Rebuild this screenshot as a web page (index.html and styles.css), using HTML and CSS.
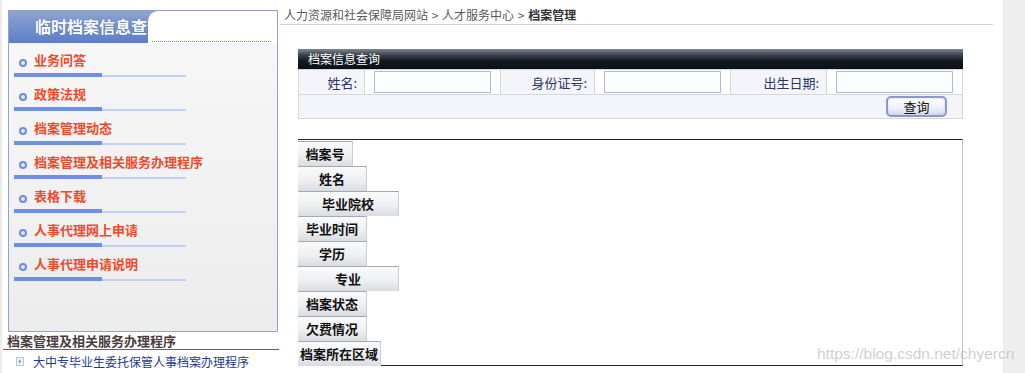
FILE: index.html
```html
<!DOCTYPE html>
<html lang="zh-CN">
<head>
<meta charset="utf-8">
<title>档案管理</title>
<link rel="stylesheet" href="styles.css">
</head>
<body>
<div class="page">
  <div class="edge"></div>
  <aside class="left">
    <div class="panel">
      <div class="panel-head">
        <div class="panel-title">临时档案信息查询</div>
        <div class="panel-tab"><div class="tab-line"></div></div>
      </div>
      <ul class="menu">
        <li class="menu-item"><div class="menu-row"><span class="dot"></span><span class="menu-text">业务问答</span></div><div class="bar"><span class="bar-dark"></span><span class="bar-light"></span></div></li>
        <li class="menu-item"><div class="menu-row"><span class="dot"></span><span class="menu-text">政策法规</span></div><div class="bar"><span class="bar-dark"></span><span class="bar-light"></span></div></li>
        <li class="menu-item"><div class="menu-row"><span class="dot"></span><span class="menu-text">档案管理动态</span></div><div class="bar"><span class="bar-dark"></span><span class="bar-light"></span></div></li>
        <li class="menu-item"><div class="menu-row"><span class="dot"></span><span class="menu-text">档案管理及相关服务办理程序</span></div><div class="bar"><span class="bar-dark"></span><span class="bar-light"></span></div></li>
        <li class="menu-item"><div class="menu-row"><span class="dot"></span><span class="menu-text">表格下载</span></div><div class="bar"><span class="bar-dark"></span><span class="bar-light"></span></div></li>
        <li class="menu-item"><div class="menu-row"><span class="dot"></span><span class="menu-text">人事代理网上申请</span></div><div class="bar"><span class="bar-dark"></span><span class="bar-light"></span></div></li>
        <li class="menu-item"><div class="menu-row"><span class="dot"></span><span class="menu-text">人事代理申请说明</span></div><div class="bar"><span class="bar-dark"></span><span class="bar-light"></span></div></li>
      </ul>
    </div>
    <div class="sub-title">档案管理及相关服务办理程序</div>
    <div class="sub-item">
      <svg class="sub-icon" width="8" height="9" viewBox="0 0 8 9"><rect x="0.5" y="0.5" width="7" height="8" fill="#eef1f8" stroke="#b9c2d8"/><path d="M3 2.5 L5.5 4.5 L3 6.5 Z" fill="#7f93bf"/></svg>
      <span class="sub-text">大中专毕业生委托保管人事档案办理程序</span>
    </div>
  </aside>

  <main class="main">
    <div class="crumb">人力资源和社会保障局网站 <span class="sep">&gt;</span> 人才服务中心 <span class="sep">&gt;</span> <b>档案管理</b></div>

    <div class="query">
      <div class="query-head">档案信息查询</div>
      <table class="query-table">
        <tr>
          <td class="lbl w66">姓名:</td>
          <td class="fld w136"><span class="input"></span></td>
          <td class="lbl w94">身份证号:</td>
          <td class="fld w136"><span class="input"></span></td>
          <td class="lbl w96">出生日期:</td>
          <td class="fld"><span class="input"></span></td>
        </tr>
        <tr>
          <td class="btn-cell" colspan="6"><span class="btn">查询</span></td>
        </tr>
      </table>
    </div>

    <div class="result">
      <div class="hcell w55">档案号</div>
      <div class="hcell w69">姓名</div>
      <div class="hcell w101">毕业院校</div>
      <div class="hcell w69">毕业时间</div>
      <div class="hcell w69">学历</div>
      <div class="hcell w101">专业</div>
      <div class="hcell w69">档案状态</div>
      <div class="hcell w69">欠费情况</div>
      <div class="hcell w83">档案所在区域</div>
    </div>
  </main>

  <div class="strip"></div>
  <div class="watermark">https://blog.csdn.net/chyercn</div>
</div>
</body>
</html>
```

FILE: styles.css
```css
* { box-sizing: border-box; }
html, body { margin: 0; padding: 0; background: #fff; }
body {
  font-family: "Noto Sans CJK SC", "Liberation Sans", sans-serif;
  font-size: 12px;
  color: #333;
}
.page {
  position: relative;
  display: flex;
  width: 1025px;
  height: 373px;
  overflow: hidden;
}
.edge { width: 2px; background: #ececec; flex: none; }

/* left column */
.left { width: 278px; flex: none; }
.panel {
  margin: 10px 0 0 6px;
  width: 270px;
  height: 322px;
  border: 1px solid #8fa4d4;
  background: linear-gradient(#f8f8f8, #ececec);
}
.panel-head {
  display: flex;
  height: 32px;
  background: linear-gradient(#8ea3d2, #5d7ec6);
}
.panel-title {
  width: 139px;
  flex: none;
  overflow: hidden;
  white-space: nowrap;
  padding-left: 26px;
  font-size: 16px;
  font-weight: bold;
  line-height: 31px;
  color: #fff;
  text-shadow: 0 0 1px #3b5aa8;
}
.panel-tab {
  flex: 1;
  background: #fff;
  border-top-left-radius: 10px;
  padding: 0 6px 0 4px;
}
.tab-line { height: 31px; border-bottom: 1px dotted #4f95cf; }
.menu { list-style: none; margin: 0; padding: 0; }
.menu-item { padding-top: 9px; height: 34px; }
.menu-row { display: flex; align-items: center; height: 16px; padding-left: 10px; }
.dot {
  width: 8px; height: 8px; flex: none;
  border-radius: 50%;
  border: 2px solid #6f8be0;
  background: #e4ebfb;
  margin-top: 6px;
  margin-right: 7px;
}
.menu-text {
  font-size: 13px;
  font-weight: bold;
  color: #ef4a2b;
  line-height: 16px;
  white-space: nowrap;
}
.bar { display: flex; align-items: flex-end; margin: 5px 0 0 5px; height: 4px; }
.bar-dark { width: 88px; height: 4px; background: #6f8fe6; }
.bar-light { width: 84px; height: 2px; background: #c2d0f8; }

.sub-title {
  margin-left: 1px;
  width: 276px;
  padding-left: 4px;
  height: 18px;
  line-height: 17px;
  font-size: 13px;
  font-weight: bold;
  color: #4b3d3d;
  border-bottom: 1px solid #3c66b6;
}
.sub-item { display: flex; align-items: center; height: 23px; padding-left: 14px; }
.sub-icon { flex: none; margin-right: 9px; }
.sub-text { font-size: 12px; color: #1c3a8e; white-space: nowrap; }

/* main */
.main { width: 723px; flex: none; }
.crumb {
  width: 713px;
  padding: 7px 0 1px 4px;
  line-height: 16px;
  font-size: 12px;
  color: #5a5a5a;
  border-bottom: 1px solid #d2d2d2;
  white-space: nowrap;
}
.crumb .sep { margin: 0 1px; }
.crumb b { color: #333; }

.query { margin: 24px 0 0 18px; width: 665px; }
.query-head {
  height: 20px;
  line-height: 20px;
  padding-left: 10px;
  font-size: 12px;
  color: #fff;
  background: linear-gradient(#7e868e 0%, #3a434c 30%, #111920 60%, #0b1117 100%);
}
.query-table {
  width: 665px;
  border-collapse: collapse;
  table-layout: fixed;
}
.query-table td { border: 1px solid #d7d7d7; padding: 0; }
.lbl {
  height: 25px;
  background: #f4f5fa;
  text-align: right;
  padding-right: 7px !important;
  font-size: 13px;
  color: #2c3366;
}
.fld { background: #fff; padding-left: 9px !important; }
.w66 { width: 66px; }
.w94 { width: 94px; }
.w96 { width: 96px; }
.w136 { width: 136px; }
.input {
  display: block;
  width: 117px;
  height: 22px;
  border: 1px solid #b3b8d8;
  background: #f8fffe;
}
.btn-cell { height: 24px; background: #f4f5fa; text-align: right; padding-right: 15px !important; }
.btn {
  display: inline-block;
  vertical-align: middle;
  width: 61px;
  height: 21px;
  line-height: 18px;
  text-align: center;
  font-size: 13px;
  color: #111;
  border: 2px solid #8d98c8;
  border-radius: 5px;
  background: linear-gradient(#ffffff, #eef0f8 60%, #d2d8ee);
  box-shadow: inset 0 0 2px #c6cde6;
}

.result {
  margin: 20px 0 0 18px;
  width: 665px;
  height: 227px;
  border-top: 1px solid #222;
  border-bottom: 1px solid #222;
  border-right: 1px solid #b9bed8;
  padding-top: 1px;
}
.hcell {
  height: 25px;
  line-height: 24px;
  text-align: center;
  font-size: 13px;
  font-weight: bold;
  color: #111;
  white-space: nowrap;
  border-top: 1px solid #a3a9b2;
  border-right: 1px solid #c9cdd3;
  background: linear-gradient(#fbfbfb, #eceef0 60%, #d9dce0);
}
.w55 { width: 55px; }
.w69 { width: 69px; }
.w83 { width: 83px; }
.w101 { width: 101px; }

.strip { flex: 1; background: #eeeeee; }
.watermark {
  position: absolute;
  left: 817px;
  top: 345px;
  font-family: "Liberation Sans", sans-serif;
  font-size: 15.5px;
  color: rgba(190, 190, 190, 0.75);
  white-space: nowrap;
}
```
